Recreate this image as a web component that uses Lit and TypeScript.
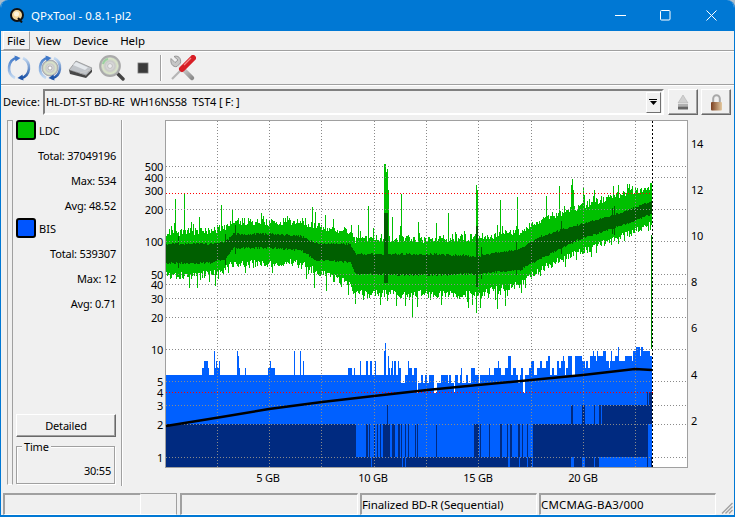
import { LitElement, html, svg, css } from "lit";
import { customElement } from "lit/decorators.js";

function rng(seed: number) {
  return () => {
    seed |= 0; seed = (seed + 0x6d2b79f5) | 0;
    let t = Math.imul(seed ^ (seed >>> 15), 1 | seed);
    t = (t + Math.imul(t ^ (t >>> 7), 61 | t)) ^ t;
    return ((t ^ (t >>> 14)) >>> 0) / 4294967296;
  };
}
const X0 = 166, X1 = 652;
const XG = [217.5, 269.5, 321.5, 374.5, 426.5, 478.5, 531.5, 583.5, 635.5];
const YG = [166.5, 177.5, 209.5, 241.5, 274.5, 284.5, 298.5, 317.5, 349.5, 381.5, 405.5, 424.5, 457.5];
// x, light top, light bottom, dark top, dark bottom
const ENV = [
  [166, 234, 274, 245, 262], [210, 233, 272, 245, 262], [225, 229, 268, 243, 258], [233, 224, 262, 235, 247],
  [270, 224, 262, 235, 247], [300, 223, 261, 237, 249], [315, 228, 270, 244, 259], [350, 233, 282, 245, 261],
  [355, 241, 292, 255, 273], [430, 241, 292, 255, 274], [478, 239, 292, 257, 273], [520, 233, 283, 250, 269],
  [541, 221, 267, 237, 257], [580, 208, 250, 225, 238], [620, 196, 235, 214, 225], [652, 189, 222, 202, 213],
];
const lerp = (x: number, i: number) => {
  for (let k = 1; k < ENV.length; k++) if (x <= ENV[k][0]) {
    const a = ENV[k - 1], b = ENV[k];
    return a[i] + ((b[i] - a[i]) * (x - a[0])) / (b[0] - a[0]);
  }
  return ENV[ENV.length - 1][i];
};
const TOP_SPIKES: Record<number, number> = {
  175: 199, 184: 193, 191: 222, 199: 217, 221: 205, 232: 209, 244: 218, 263: 216, 287: 216, 305: 218, 312: 207, 325: 215, 333: 219,
  368: 206, 384: 164, 385: 164, 386: 172, 387: 169, 388: 190, 392: 217, 401: 194, 418: 222, 436: 223, 448: 213, 476: 185, 477: 190,
  500: 200, 517: 197, 546: 196, 559: 186, 571: 185, 572: 179, 573: 190, 583: 188, 584: 195, 613: 186, 618: 185, 627: 184, 650: 183,
};
const BOT_SPIKES: Record<number, number> = {
  189: 288, 197: 288, 215: 286, 314: 288, 326: 291, 380: 305, 396: 306, 412: 317, 409: 300, 441: 305, 468: 308, 476: 313, 480: 308, 497: 309, 505: 306,
};
function greens() {
  const r = rng(7);
  let l = "", d = "";
  for (let x = X0; x < X1; x++) {
    let lt = lerp(x, 1) - r() * 8 + 2, lb = lerp(x, 2) + r() * 8 - 2;
    if (r() < 0.12) lt -= r() * 12;
    if (r() < 0.12) lb += r() * 10;
    if (TOP_SPIKES[x]) lt = TOP_SPIKES[x];
    if (BOT_SPIKES[x]) lb = BOT_SPIKES[x];
    let dt = lerp(x, 3) - r() * 2, db = lerp(x, 4) + r() * 2;
    if (r() < 0.015) { dt -= 8; db += 6; }
    if (x >= 384 && x <= 387) { dt = 213; db = 283; }
    if (x === 476 || x === 477) { dt = 226; db = 287; }
    l += `M${x + 0.5} ${Math.round(lt)}V${Math.round(lb)}`;
    d += `M${x + 0.5} ${Math.round(dt)}V${Math.round(db)}`;
  }
  return { l, d };
}
const lv = (n: number) => Math.round(457.3 - 106.2 * Math.log10(n));
const BLUE_SPIKES: Record<number, number> = { 214: 10, 237: 10, 238: 9, 294: 10, 300: 10, 384: 10, 385: 12, 388: 9 };
function blues() {
  const r = rng(23);
  let p = "";
  let x = X0;
  while (x < X1) {
    const u = r();
    let n: number;
    let w = 1 + Math.floor(r() * 3);
    if (x < 385) {
      n = u < 0.6 ? 6 : u < 0.66 ? 5 : u < 0.84 ? 7 : u < 0.98 ? 8 : 9;
      w = n === 6 ? 2 + Math.floor(r() * 5) : 1 + Math.floor(r() * 2);
    } else if (x < 470) {
      n = u < 0.35 ? 5 : u < 0.72 ? 6 : u < 0.79 ? 4 : u < 0.92 ? 7 : 8;
    } else if (x < 530) {
      n = u < 0.45 ? 6 : u < 0.72 ? 7 : u < 0.84 ? 5 : u < 0.88 ? 4 : u < 0.97 ? 8 : 9;
    } else if (x < 580) n = u < 0.25 ? 6 : u < 0.6 ? 7 : u < 0.85 ? 8 : 9;
    else if (x < 615) n = u < 0.25 ? 7 : u < 0.65 ? 8 : u < 0.85 ? 9 : 10;
    else n = u < 0.15 ? 8 : u < 0.6 ? 9 : u < 0.9 ? 10 : 11;
    for (let i = 0; i < w && x < X1; i++, x++) {
      p += `M${x + 0.5} ${lv(BLUE_SPIKES[x] ?? n)}V467`;
    }
  }
  return p;
}
const rect = (x0: number, x1: number, y0: number, y1: number) => `M${x0} ${y0}H${x1}V${y1}H${x0}Z`;
function darks() {
  let p = "";
  const slots = [[371, 372], [402, 403], [405, 406], [508, 510], [519, 520], [527, 528], [532, 533], [571, 574], [582, 585], [594, 595], [599, 647], [648, 651]];
  let c = X0;
  for (const [a, b] of slots) { p += rect(c, a, 457, 467); c = b; }
  p += rect(c, X1, 457, 467);
  p += rect(X0, 356, 424, 457);
  const st = [[366, 368], [369, 370], [374, 375], [377, 378], [380, 381], [383, 390], [392, 395], [398, 400], [401, 402], [405, 406], [408, 409], [415, 416], [417, 418], [436, 437], [474, 479], [480, 481], [489, 490], [500, 502], [507, 508], [510, 512], [518, 520], [522, 523], [527, 528], [533, 648]];
  for (const [a, b] of st) p += rect(a, b, 424, 457);
  const st2 = [[387, 388], [571, 573], [582, 585], [594, 595], [599, 601], [602, 652]];
  for (const [a, b] of st2) p += rect(a, b, 405, 424);
  p += rect(647, 648, 392, 405) + rect(649, 652, 392, 405);
  return p;
}
const G = greens(), BL = blues(), DK = darks();
const CURVE = "M166 426L217 417.7L269 409L322 402L374 396L427 390L478 385L531 380L583 375L635 369L652 370";
const LEFT: [string, number][] = [["500", 167], ["400", 178], ["300", 191], ["200", 210], ["100", 242], ["50", 275], ["40", 285], ["30", 299], ["20", 318], ["10", 350], ["5", 382], ["4", 393], ["3", 406], ["2", 425], ["1", 458]];
const RIGHT: [string, number][] = [["14", 144], ["12", 190], ["10", 236], ["8", 282], ["6", 328], ["4", 375], ["2", 421]];
const XL: [string, number][] = [["5 GB", 268], ["10 GB", 373], ["15 GB", 478], ["20 GB", 583]];

const arcs = svg`
  <path d="M11.5 2.5A11 11 0 0 0 9 23" fill="none" stroke="url(#arcL)" stroke-width="2.6"/>
  <path d="M8.5 0.5L14.5 3L9.5 6.5Z" fill="#3f78c8"/>
  <path d="M14.5 23.5A11 11 0 0 0 17 3" fill="none" stroke="url(#arcR)" stroke-width="2.6"/>
  <path d="M17.5 25.5L11.5 23L16.5 19.5Z" fill="#1f55a8"/>`;

@customElement("app-root")
export class AppRoot extends LitElement {
  static styles = css`
    :host { display: block; width: 735px; height: 517px; overflow: hidden; background: #a9bdcc;
      font: 11px "Noto Sans", "Open Sans", sans-serif; color: #000; }
    .win { height: 517px; box-sizing: border-box; display: flex; flex-direction: column; background: #f0f0f0;
      border: 1px solid #0078d4; border-top: 0; border-bottom-width: 2px; border-radius: 8px 8px 0 0; overflow: hidden; }
    .title { height: 31px; flex: none; background: #0078d4; color: #fff; display: flex; align-items: center; padding-left: 9px; font-size: 11.5px; }
    .title .name { margin-left: 7px; flex: 1; }
    .wc { width: 45.5px; height: 31px; display: flex; align-items: center; justify-content: center; }
    .menu { height: 19px; flex: none; display: flex; padding-left: 2px; border-bottom: 1px solid #a0a0a0; box-shadow: 0 1px 0 #fff; font-size: 11.5px; letter-spacing: -.05px; }
    .mi { padding: 0 6px; line-height: 19px; box-sizing: border-box; }
    .mi.on { background: #f0f0f0; border: 1px solid; border-color: #fff #a0a0a0 #a0a0a0 #fff; line-height: 17px; padding: 0 4px 0 3px; width: 27px; }
    .tools { height: 32px; margin-top: 1px; flex: none; display: flex; align-items: center; padding-left: 2px; border-bottom: 1px solid #a0a0a0; box-shadow: 0 1px 0 #fff; }
    .tb { width: 31px; height: 32px; display: flex; align-items: center; justify-content: center; }
    .sep { width: 2px; height: 26px; margin: 0 5px 0 2px; background: #a0a0a0; border-right: 1px solid #fff; box-sizing: border-box; }
    .dev { height: 34px; flex: none; margin-top: 1px; display: flex; align-items: flex-start; padding: 3px 0 0 2px; box-sizing: border-box; }
    .dev label { width: 40px; line-height: 25px; flex: none; }
    .combo { width: 621px; height: 26px; box-sizing: border-box; flex: none; border: 2px solid; border-color: #808080 #fff #fff #808080;
      display: flex; align-items: center; justify-content: space-between; padding: 0 1px 0 1px; line-height: 20px; white-space: pre; letter-spacing: -.16px; }
    .drop { width: 15px; height: 21px; display: flex; align-items: center; justify-content: center; box-sizing: border-box;
      border: 1px solid; border-color: #fff #707070 #707070 #fff; }
    .sq { width: 30px; height: 26px; margin-left: 4px; flex: none; box-sizing: border-box; display: flex; align-items: center; justify-content: center;
      border: 1px solid; border-color: #fff #696969 #696969 #fff; box-shadow: inset -1px -1px 0 #a0a0a0; }
    .sq + .sq { margin-left: 3px; }
    .main { height: 366px; flex: none; display: flex; }
    .strip { width: 6px; margin-left: 6px; margin-bottom: 1px; flex: none; box-sizing: border-box; border: 1px solid; border-color: #a0a0a0 #a0a0a0 #fff #a0a0a0; }
    .stats { width: 109px; flex: none; box-sizing: border-box; padding: 0 5px 2px 3px; border-right: 1px solid #a0a0a0; box-shadow: 1px 0 0 #fff;
      display: flex; flex-direction: column; letter-spacing: -.2px; }
    .lg { height: 23px; display: flex; align-items: flex-start; gap: 3px; flex: none; line-height: 22px; letter-spacing: 0; }
    .sw { width: 20px; height: 20px; box-sizing: border-box; border: 2px solid #000; border-radius: 3px; flex: none; }
    .sw.g { background: #00c000; }
    .sw.b { background: #0055ff; }
    .st { height: 25px; line-height: 25px; text-align: right; flex: none; }
    .btn { margin-top: auto; height: 23px; width: 100px; box-sizing: border-box; flex: none; text-align: center; line-height: 21px;
      border: 1px solid; border-color: #fff #696969 #696969 #fff; box-shadow: inset -1px -1px 0 #a0a0a0; }
    .box { margin-top: 9px; width: 99px; height: 38px; box-sizing: border-box; flex: none; border: 1px solid #a0a0a0; box-shadow: 1px 1px 0 #fff, inset 1px 1px 0 #fff;
      position: relative; text-align: right; padding: 15px 3px 0 0; line-height: 18px; }
    .leg { position: absolute; left: 5px; top: -8px; background: #f0f0f0; padding: 0 2px; line-height: 15px; }
    .chart { display: block; flex: none; }
    .chart text { font: 11px "Noto Sans", "Open Sans", sans-serif; fill: #000; letter-spacing: -.25px; }
    .status { flex: 1; display: flex; padding: 7px 0 0 2px; position: relative; font-size: 11.5px; }
    .cell { height: 22px; box-sizing: border-box; border: 1px solid; border-color: #a0a0a0 #fff #fff #a0a0a0; border-top-width: 2px; border-left-width: 2px;
      padding-left: 0; line-height: 19px; flex: none; margin-right: 2px; white-space: nowrap; }
    .cell.a { width: 138px; margin-right: 0; }
    .cell.a2 { width: 36px; border-left: 0; border-top-width: 1px; margin-right: 3px; border-right-color: #a0a0a0; }
    .cell.b { width: 178px; }
    .cell.c { width: 177px; }
    .cell.t { letter-spacing: -.1px; }
    .cell.m { letter-spacing: .2px; }
    .grip { position: absolute; right: 1px; bottom: 1px; }
  `;
  render() {
    return html`<div class="win">
      <div class="title">
        <svg width="14" height="15" viewBox="0 0 14 15"><circle cx="7" cy="7" r="6" fill="#f4d79a" stroke="#111" stroke-width="2"/><circle cx="6.5" cy="6" r="2.5" fill="#fff6dc"/><path d="M8 10L12 14.5" stroke="#111" stroke-width="2"/></svg>
        <span class="name">QPxTool - 0.8.1-pl2</span>
        <div class="wc"><svg width="11" height="11"><path d="M0 5.5H11" stroke="#fff"/></svg></div>
        <div class="wc"><svg width="11" height="11"><rect x=".5" y=".5" width="9.5" height="9.5" rx="1" fill="none" stroke="#fff"/></svg></div>
        <div class="wc"><svg width="11" height="11"><path d="M.5 .5L10.5 10.5M10.5 .5L.5 10.5" stroke="#fff"/></svg></div>
      </div>
      <div class="menu"><div class="mi on">File</div><div class="mi">View</div><div class="mi">Device</div><div class="mi">Help</div></div>
      <div class="tools">
        <svg width="0" height="0"><defs>
          <linearGradient id="arcL" x1="0" y1="0" x2="0" y2="1"><stop offset="0" stop-color="#3f78c8"/><stop offset="1" stop-color="#c6dbf2"/></linearGradient>
          <linearGradient id="arcR" x1="0" y1="1" x2="0" y2="0"><stop offset="0" stop-color="#174fa6"/><stop offset="1" stop-color="#c6dbf2"/></linearGradient>
          <radialGradient id="disc"><stop offset="0" stop-color="#f4f4f4"/><stop offset=".5" stop-color="#c9c9c9"/><stop offset=".75" stop-color="#dbe6c8"/><stop offset="1" stop-color="#a8a8b8"/></radialGradient>
          <linearGradient id="lock" x1="0" y1="0" x2="1" y2="0"><stop offset="0" stop-color="#7a3f20"/><stop offset="1" stop-color="#e4c9a0"/></linearGradient>
          <linearGradient id="silver" x1="0" y1="0" x2="1" y2="1"><stop offset="0" stop-color="#f2f2f2"/><stop offset="1" stop-color="#8d8d8d"/></linearGradient>
        </defs></svg>
        <div class="tb"><svg width="26" height="26" viewBox="0 0 26 26">${arcs}</svg></div>
        <div class="tb"><svg width="26" height="26" viewBox="0 0 26 26"><circle cx="13" cy="13" r="8" fill="url(#disc)" stroke="#9a9a9a" stroke-width=".6"/><circle cx="13" cy="13" r="2" fill="#fff" stroke="#888" stroke-width=".6"/>${arcs}</svg></div>
        <div class="tb"><svg width="26" height="26" viewBox="0 0 26 26"><path d="M1 15L8 6L24 13L18 20Z" fill="#c0c4c9" stroke="#7a7a7a" stroke-width=".6"/><path d="M8 7L20 12.5L17 15L5 10Z" fill="#e4e8ec"/><path d="M1 15L18 20.5L24 14V17L18 23L2 19Z" fill="#484848"/><path d="M12 18L22 15" stroke="#ccc"/></svg></div>
        <div class="tb"><svg width="26" height="26" viewBox="0 0 26 26"><path d="M17 17L24 24" stroke="#444" stroke-width="3.4" stroke-linecap="round"/><circle cx="11" cy="11" r="10" fill="url(#disc)" stroke="#aaa" stroke-width="1.8"/><circle cx="11" cy="11" r="2.4" fill="#eee" stroke="#999" stroke-width=".5"/><path d="M4 9A7 7 0 0 1 9 4" stroke="#9bd0a0" stroke-width="2" fill="none"/></svg></div>
        <div class="tb"><svg width="12" height="12"><rect x="1" y="1" width="10" height="10" fill="#3a3a3a" stroke="#777" stroke-width=".8"/></svg></div>
        <div class="sep"></div>
        <div class="tb"><svg width="27" height="27" viewBox="0 0 27 27"><path d="M9 9L23 23" stroke="url(#silver)" stroke-width="4.5" stroke-linecap="round"/><path d="M2 3.5L6 7.5L9 5L5 1.5C9 0 12.5 3 11.5 8L8 11.5C3.5 12.5 1 8 2 3.5Z" fill="#c6c6c6" stroke="#808080" stroke-width=".7"/><path d="M12 15L3 24" stroke="#b5b5b5" stroke-width="2.2"/><path d="M13 14L24 3" stroke="#d81f26" stroke-width="6" stroke-linecap="round"/><path d="M15 10L22 3" stroke="#f58a8a" stroke-width="1.2"/></svg></div>
      </div>
      <div class="dev">
        <label>Device:</label>
        <div class="combo"><span>HL-DT-ST BD-RE  WH16NS58  TST4 [ F: ]</span>
          <div class="drop"><svg width="9" height="7"><path d="M0 0H8V1H0ZM1 2H8L4.5 6Z" fill="#000"/></svg></div></div>
        <div class="sq"><svg width="12" height="15" viewBox="0 0 12 15"><path d="M6 0L11 8H1Z" fill="#d0d0d0" stroke="#a8a8a8" stroke-width=".5"/><rect x="1" y="9" width="10" height="2.5" fill="#b0b0b0"/><rect x="1" y="11.5" width="10" height="3" fill="#666"/></svg></div>
        <div class="sq"><svg width="13" height="17" viewBox="0 0 13 17"><path d="M3.2 9V4.5A3.3 3.3 0 0 1 9.8 4.5V9" fill="none" stroke="#a8a8a8" stroke-width="2"/><rect x="1" y="8" width="11" height="8.5" rx="1" fill="url(#lock)"/></svg></div>
      </div>
      <div class="main">
        <div class="strip"></div>
        <div class="stats">
          <div class="lg"><div class="sw g"></div>LDC</div>
          <div class="st">Total: 37049196</div>
          <div class="st">Max: 534</div>
          <div class="st">Avg: 48.52</div>
          <div class="lg"><div class="sw b"></div>BIS</div>
          <div class="st">Total: 539307</div>
          <div class="st">Max: 12</div>
          <div class="st">Avg: 0.71</div>
          <div class="btn">Detailed</div>
          <div class="box"><span class="leg">Time</span>30:55</div>
        </div>
        <svg class="chart" width="612" height="366" viewBox="122 120 612 366">
          <rect x="165.5" y="120.5" width="522" height="347" fill="#fff" stroke="#a0a0a0"/>
          <g fill="none" shape-rendering="crispEdges">
            <path d=${G.l} stroke="#00c000"/>
            <path d=${G.d} stroke="#005f00"/>
            <path d="M651.5 235V349" stroke="#008a00"/>
            <path d=${BL} stroke="#0060ff"/>
            <path d=${DK} fill="#002a80"/>
            ${YG.map((y) => svg`<path d="M166 ${y}H687" stroke="#8a8a8a" stroke-dasharray="1 2"/>`)}
            ${XG.map((x) => svg`<path d="M${x} 121V467" stroke="#8a8a8a" stroke-dasharray="1 2"/>`)}
            <path d="M166 193.5H653M166 392.5H653" stroke="#ff0000" stroke-dasharray="1 2"/>
            <path d="M652.5 121V467" stroke="#000" stroke-dasharray="2 2"/>
          </g>
          <path d=${CURVE} fill="none" stroke="#000" stroke-width="2.5"/>
          ${LEFT.map(([t, y]) => svg`<text x="163" y=${y + 4} text-anchor="end">${t}</text>`)}
          ${RIGHT.map(([t, y]) => svg`<text x="691" y=${y + 4}>${t}</text>`)}
          ${XL.map(([t, x]) => svg`<text x=${x} y="482" text-anchor="middle">${t}</text>`)}
        </svg>
      </div>
      <div class="status">
        <div class="cell a"></div>
        <div class="cell a2"></div>
        <div class="cell b"></div>
        <div class="cell c t">Finalized BD-R (Sequential)</div>
        <div class="cell c m">CMCMAG-BA3/000</div>
        <svg class="grip" width="12" height="12"><path d="M11.5 1L1 11.5M11.5 4.5L4.5 11.5M11.5 8L8 11.5" stroke="#a0a0a0" stroke-width="1.4"/></svg>
      </div>
    </div>`;
  }
}
